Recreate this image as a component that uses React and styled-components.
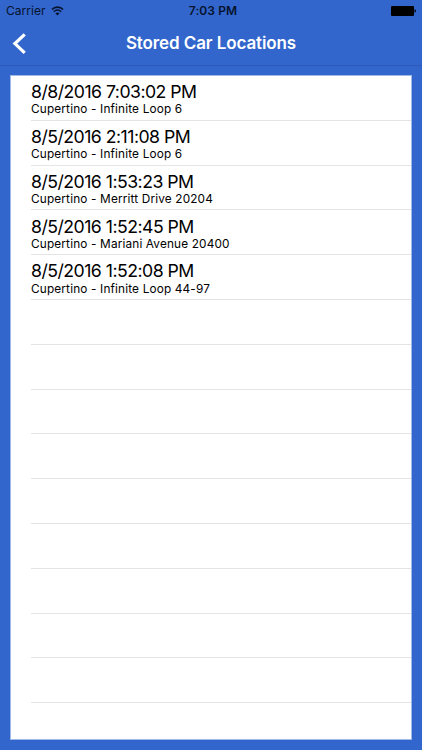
import React from "react";
import styled, { createGlobalStyle } from "styled-components";

const GlobalStyle = createGlobalStyle`
  * { box-sizing: border-box; }
  body { margin: 0; background: #3266cc; }
`;

const Screen = styled.div`
  display: flex;
  flex-direction: column;
  width: 422px;
  height: 750px;
  overflow: hidden;
  background: #3266cc;
  font-family: Inter, "Liberation Sans", sans-serif;
`;

const StatusBar = styled.div`
  display: grid;
  grid-template-columns: 1fr auto 1fr;
  align-items: center;
  height: 22px;
  padding: 0 6px;
  color: #07122c;
  font-size: 12px;
  line-height: 22px;
`;

const Carrier = styled.div`
  display: flex;
  align-items: center;
  gap: 5px;
  letter-spacing: 0.05px;
`;

const Clock = styled.div`
  padding-left: 4px;
  font-weight: 600;
  letter-spacing: 0.1px;
`;

const BatterySlot = styled.div`
  display: flex;
  justify-content: flex-end;
`;

const NavBar = styled.header`
  display: grid;
  grid-template-columns: 40px 1fr 40px;
  align-items: center;
  height: 44px;
  border-bottom: 1px solid #2c5ab4;
`;

const BackButton = styled.button`
  display: flex;
  padding: 0 0 0 12px;
  border: 0;
  background: none;
`;

const Title = styled.h1`
  margin: 0 0 1px;
  color: #fff;
  text-align: center;
  font-size: 17px;
  font-weight: 600;
  line-height: 24px;
  letter-spacing: -0.1px;
`;

const Table = styled.main`
  width: 402px;
  height: 665px;
  margin: 9px 0 0 10px;
  overflow: hidden;
  border: 1px solid #9fb8e7;
  background: #fff;
`;

const Row = styled.div`
  height: 44.8px;
  margin-left: 20px;
  padding-top: 5.25px;
  border-bottom: 1px solid #e4e4e6;
  color: #000;
  white-space: nowrap;
`;

const Timestamp = styled.div`
  font-size: 17.7px;
  line-height: 21.1px;
  letter-spacing: -0.53px;
`;

const Place = styled.div`
  font-size: 11.8px;
  line-height: 14px;
  letter-spacing: 0.16px;
`;

const locations = [
  { time: "8/8/2016 7:03:02 PM", place: "Cupertino - Infinite Loop 6" },
  { time: "8/5/2016 2:11:08 PM", place: "Cupertino - Infinite Loop 6" },
  { time: "8/5/2016 1:53:23 PM", place: "Cupertino - Merritt Drive 20204" },
  { time: "8/5/2016 1:52:45 PM", place: "Cupertino - Mariani Avenue 20400" },
  { time: "8/5/2016 1:52:08 PM", place: "Cupertino - Infinite Loop 44-97" },
];

const EMPTY_ROWS = 9;

const WifiIcon = () => (
  <svg width="13" height="10" viewBox="0 0 13 10" fill="none" stroke="#07122c">
    <path d="M0.9 3.5C4 0.4 9 0.4 12.1 3.5" strokeWidth="1.7" />
    <path d="M2.8 5.7C5 3.7 8 3.7 10.2 5.7" strokeWidth="1.5" />
    <path d="M4.4 7.3Q6.5 5.6 8.6 7.3L6.5 9.4Z" fill="#07122c" stroke="none" />
  </svg>
);

const BatteryIcon = () => (
  <svg width="25" height="10" viewBox="0 0 25 10">
    <rect x="0" y="0" width="23" height="10" rx="1" fill="#000" />
    <path d="M23.5 3.3Q25 3.6 25 5T23.5 6.7Z" fill="#000" />
  </svg>
);

const BackIcon = () => (
  <svg width="16" height="22" viewBox="0 0 16 22" fill="none">
    <path d="M12.7 1.3L2.9 10.6L12.7 19.9" stroke="#fff" strokeWidth="3.2" />
  </svg>
);

export default function App() {
  return (
    <>
      <GlobalStyle />
      <Screen>
        <StatusBar>
          <Carrier>
            Carrier
            <WifiIcon />
          </Carrier>
          <Clock>7:03 PM</Clock>
          <BatterySlot>
            <BatteryIcon />
          </BatterySlot>
        </StatusBar>
        <NavBar>
          <BackButton aria-label="Back">
            <BackIcon />
          </BackButton>
          <Title>Stored Car Locations</Title>
        </NavBar>
        <Table>
          {locations.map(({ time, place }) => (
            <Row key={time}>
              <Timestamp>{time}</Timestamp>
              <Place>{place}</Place>
            </Row>
          ))}
          {Array.from({ length: EMPTY_ROWS }, (_, i) => (
            <Row key={i} />
          ))}
        </Table>
      </Screen>
    </>
  );
}
